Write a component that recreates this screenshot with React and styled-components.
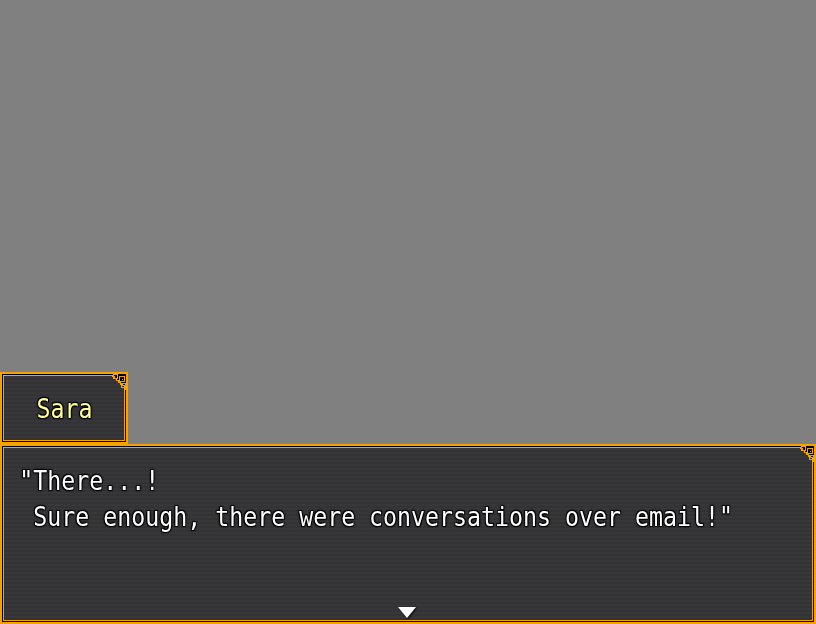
import React from "react";
import styled, { createGlobalStyle } from "styled-components";

const GlobalStyle = createGlobalStyle`
  html, body {
    margin: 0;
    padding: 0;
    background: #808080;
  }
`;

const Screen = styled.div`
  width: 816px;
  height: 624px;
  background: #808080;
  display: flex;
  flex-direction: column;
  justify-content: flex-end;
  font-family: "DejaVu Sans Mono", "Liberation Mono", monospace;
  overflow: hidden;
`;

const Window = styled.div`
  position: relative;
  box-sizing: border-box;
  width: ${(p) => p.$width};
  height: ${(p) => p.$height}px;
  border: 2px solid #f5a300;
  box-shadow: inset 0 0 0 1px #000, inset 0 0 0 2px #f5a300;
  background: repeating-linear-gradient(
    to bottom,
    #333336 0px,
    #333336 2px,
    #37373a 2px,
    #37373a 4px
  );
  display: flex;
  flex-direction: column;
`;

const outline = `
  text-shadow: 1px 1px 1px #000, -1px -1px 1px #000, 1px -1px 1px #000,
    -1px 1px 1px #000, 0 0 3px #000;
`;

const NameText = styled.div`
  flex: 1;
  display: flex;
  align-items: center;
  justify-content: center;
  padding-left: 2px;
  span {
    display: inline-block;
    color: #ffff9a;
    font-size: 27px;
    transform: scaleX(0.86);
    ${outline}
  }
`;

const Message = styled.div`
  padding: 17px 0 0 20px;
  color: #fff;
  font-size: 27px;
  line-height: 36px;
  white-space: pre;
  transform: scaleX(0.861);
  transform-origin: left top;
  ${outline}
`;

const Ornament = styled.svg`
  position: absolute;
  top: 0;
  right: 0;
  width: 16px;
  height: 16px;
`;

const Pause = styled.svg`
  position: absolute;
  left: 396px;
  bottom: 4px;
  width: 18px;
  height: 11px;
  filter: drop-shadow(1px 1px 1px rgba(0, 0, 0, 0.8));
`;

const CornerOrnament = () => (
  <Ornament viewBox="0 0 16 16" shapeRendering="crispEdges">
    <path d="M0 0 H16 V16 H15 V13 H14 V11 H12 V10 H10 V8 H8 V6 H6 V4 H4 V2 H2 V1 H0 Z" fill="#000" />
    <path
      d="M0 1.5 H2.5 V2.5 H4.5 V4.5 H6.5 V6.5 H8.5 V8.5 H10.5 V10.5 H12.5 V11.5 H14.5 V13.5 H15.5 V16"
      fill="none"
      stroke="#f5a300"
      strokeWidth="1"
    />
    <rect x="3.5" y="0.5" width="4" height="4" fill="none" stroke="#f5a300" />
    <rect x="9.5" y="2.5" width="5" height="5" fill="none" stroke="#f5a300" />
    <rect x="11.5" y="4.5" width="1" height="1" fill="#f5a300" />
    <rect x="11.5" y="9.5" width="4" height="4" fill="none" stroke="#f5a300" />
  </Ornament>
);

const App = () => {
  return (
    <>
      <GlobalStyle />
      <Screen>
        <Window $width="128px" $height={72}>
          <CornerOrnament />
          <NameText>
            <span>Sara</span>
          </NameText>
        </Window>
        <Window $width="816px" $height={180}>
          <CornerOrnament />
          <Message>
            {'"There...!\n Sure enough, there were conversations over email!"'}
          </Message>
          <Pause viewBox="0 0 18 11">
            <path d="M0 0 H18 L9 11 Z" fill="#fff" />
          </Pause>
        </Window>
      </Screen>
    </>
  );
};

export default App;
